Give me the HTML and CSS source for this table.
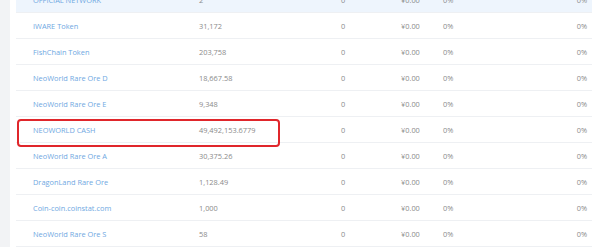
FILE: index.html
```html
<!DOCTYPE html>
<html>
<head>
<meta charset="utf-8">
<link rel="stylesheet" href="styles.css">
</head>
<body>
<div class="page">
  <div class="side"></div>
  <div class="panel">
    <div class="table">
      <div class="row hl"><span class="name">OFFICIAL NETWORK</span><span>2</span><span>0</span><span>¥0.00</span><span>0%</span><span class="end">0%</span></div>
      <div class="row"><span class="name">IWARE Token</span><span>31,172</span><span>0</span><span>¥0.00</span><span>0%</span><span class="end">0%</span></div>
      <div class="row"><span class="name">FishChain Token</span><span>203,758</span><span>0</span><span>¥0.00</span><span>0%</span><span class="end">0%</span></div>
      <div class="row"><span class="name">NeoWorld Rare Ore D</span><span>18,667.58</span><span>0</span><span>¥0.00</span><span>0%</span><span class="end">0%</span></div>
      <div class="row"><span class="name">NeoWorld Rare Ore E</span><span>9,348</span><span>0</span><span>¥0.00</span><span>0%</span><span class="end">0%</span></div>
      <div class="row mark"><span class="name">NEOWORLD CASH</span><span>49,492,153.6779</span><span>0</span><span>¥0.00</span><span>0%</span><span class="end">0%</span><i class="box"></i></div>
      <div class="row"><span class="name">NeoWorld Rare Ore A</span><span>30,375.26</span><span>0</span><span>¥0.00</span><span>0%</span><span class="end">0%</span></div>
      <div class="row"><span class="name">DragonLand Rare Ore</span><span>1,128.49</span><span>0</span><span>¥0.00</span><span>0%</span><span class="end">0%</span></div>
      <div class="row"><span class="name">Coin-coin.coinstat.com</span><span>1,000</span><span>0</span><span>¥0.00</span><span>0%</span><span class="end">0%</span></div>
      <div class="row"><span class="name">NeoWorld Rare Ore S</span><span>58</span><span>0</span><span>¥0.00</span><span>0%</span><span class="end">0%</span></div>
    </div>
  </div>
</div>
</body>
</html>
```
FILE: styles.css
```css
html, body {
  margin: 0;
  padding: 0;
  background: #ffffff;
  overflow: hidden;
}
.page {
  display: flex;
  height: 247px;
  font-family: "Open Sans", "Noto Sans", sans-serif;
  font-size: 7.4px;
}
.side {
  width: 10px;
  background: #f2f3f5;
  flex: none;
}
.panel {
  flex: 1;
  padding: 0 8px 0 6px;
}
.table {
  margin-top: -13px;
}
.row {
  position: relative;
  display: grid;
  grid-template-columns: 166px 142px 60px 42px 1fr auto;
  align-items: center;
  height: 25px;
  padding: 0 5px 0 17px;
  border-bottom: 1px solid #eef0f3;
  color: #8a8a8a;
}
.row.hl {
  background: #eef5fd;
}
.name {
  color: #6fa8e2;
}
.end {
  text-align: right;
}
.box {
  position: absolute;
  left: 1px;
  top: 2px;
  width: 263px;
  height: 28px;
  box-sizing: border-box;
  border: 2px solid #e0262b;
  border-radius: 4px;
}
```
